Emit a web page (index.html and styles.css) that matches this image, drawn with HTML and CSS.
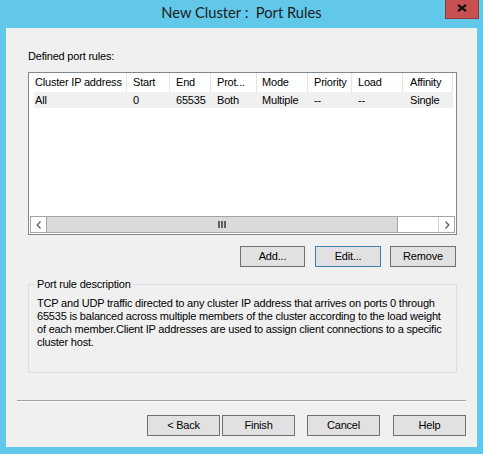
FILE: index.html
```html
<!DOCTYPE html>
<html>
<head>
<meta charset="utf-8">
<link rel="stylesheet" href="styles.css">
</head>
<body>
<div class="frame">
  <div class="titlebar">
    <span class="title">New Cluster :&nbsp; Port Rules</span>
    <div class="close"><svg width="10" height="8" viewBox="0 0 10 8"><path d="M1 0.8 L9 7.2 M9 0.8 L1 7.2" stroke="#111" stroke-width="2.2" fill="none"/></svg></div>
  </div>
  <div class="client">
    <div class="lbl">Defined port rules:</div>
    <div class="list">
      <div class="hdr">
        <div class="c c1">Cluster IP address</div>
        <div class="c c2">Start</div>
        <div class="c c3">End</div>
        <div class="c c4">Prot...</div>
        <div class="c c5">Mode</div>
        <div class="c c6">Priority</div>
        <div class="c c7">Load</div>
        <div class="c c8">Affinity</div>
      </div>
      <div class="row">
        <div class="c c1 first">All</div>
        <div class="c c2">0</div>
        <div class="c c3">65535</div>
        <div class="c c4">Both</div>
        <div class="c c5">Multiple</div>
        <div class="c c6">--</div>
        <div class="c c7">--</div>
        <div class="c c8">Single</div>
      </div>
      <div class="spacer"></div>
      <div class="hscroll">
        <div class="sbtn sleft"><svg width="6" height="8" viewBox="0 0 6 8"><path d="M4.5 0.5 L1.2 4 L4.5 7.5" stroke="#606060" stroke-width="1.3" fill="none"/></svg></div>
        <div class="thumb"><span class="grip"></span><span class="grip"></span><span class="grip"></span></div>
        <div class="track"></div>
        <div class="sbtn sright"><svg width="6" height="8" viewBox="0 0 6 8"><path d="M1.5 0.5 L4.8 4 L1.5 7.5" stroke="#606060" stroke-width="1.3" fill="none"/></svg></div>
      </div>
    </div>
    <div class="btnrow">
      <div class="btn b-add">Add...</div>
      <div class="btn b-edit">Edit...</div>
      <div class="btn b-remove">Remove</div>
    </div>
    <fieldset class="group">
      <legend>Port rule description</legend>
      <p>TCP and UDP traffic directed to any cluster IP address that arrives on ports 0 through<br>65535 is balanced across multiple members of the cluster according to the load weight<br>of each member.Client IP addresses are used to assign client connections to a specific<br>cluster host.</p>
    </fieldset>
    <div class="sep"></div>
    <div class="footer">
      <div class="btn fbtn f-back">&lt; Back</div>
      <div class="btn fbtn f-finish">Finish</div>
      <div class="btn fbtn f-cancel">Cancel</div>
      <div class="btn fbtn f-help">Help</div>
    </div>
  </div>
</div>
</body>
</html>
```
FILE: styles.css
```css
html, body {
  margin: 0;
  padding: 0;
}
body {
  background: #62c8ea;
  width: 483px;
  height: 454px;
  overflow: hidden;
  font-family: "Liberation Sans", Arial, sans-serif;
  font-size: 11px;
  letter-spacing: -0.2px;
  color: #000;
}
.frame {
  width: 483px;
  height: 454px;
}
.titlebar {
  height: 28px;
  display: grid;
  grid-template-columns: 1fr auto 1fr;
}
.title {
  grid-column: 2;
  font-family: Lato, "Open Sans", sans-serif;
  font-size: 14.7px;
  letter-spacing: 0;
  line-height: 20px;
  padding-top: 2px;
  color: #1b1b1b;
  white-space: nowrap;
}
.close {
  grid-column: 3;
  justify-self: end;
  margin-right: 4px;
  width: 34px;
  height: 19px;
  box-sizing: border-box;
  background: #c75050;
  border: 1px solid #8b3c3a;
  border-top: none;
  display: flex;
  justify-content: center;
  align-items: flex-start;
  padding-top: 4px;
}
.close svg { display: block; }
.client {
  margin: 0 6px;
  height: 419px;
  background: #f0f0f0;
  box-sizing: border-box;
  padding-top: 22px;
  display: flex;
  flex-direction: column;
}
.lbl {
  margin-left: 22px;
  line-height: 13px;
  height: 13px;
}
.list {
  margin-left: 22px;
  margin-top: 9px;
  width: 429px;
  height: 163px;
  box-sizing: border-box;
  border: 1px solid #828790;
  background: #fff;
  display: flex;
  flex-direction: column;
}
.hdr, .row {
  display: flex;
  white-space: nowrap;
}
.hdr {
  height: 19px;
  line-height: 19px;
}
.hdr .c {
  border-right: 1px solid #e5e5e5;
}
.row {
  height: 16px;
  line-height: 16px;
}
.c {
  box-sizing: border-box;
  padding-left: 6px;
  overflow: hidden;
}
.row .c { background: #f0f0f0; }
.row .first {
  margin-left: 5px;
  padding-left: 1px;
  width: 93px;
}
.c1 { width: 98px; }
.c2 { width: 43px; }
.c3 { width: 41px; }
.c4 { width: 46px; }
.c5 { width: 51px; padding-left: 5px; }
.c6 { width: 44px; }
.c7 { width: 51px; }
.c8 { width: 50px; padding-left: 7px; }
.spacer { flex: 1; }
.hscroll {
  margin: 0 1px 1px 1px;
  height: 17px;
  box-sizing: border-box;
  border: 1px solid #a5a5a5;
  display: flex;
  background: #fff;
}
.sbtn {
  width: 16px;
  box-sizing: border-box;
  display: flex;
  align-items: center;
  justify-content: center;
  background: #fff;
}
.sleft { border-right: 1px solid #a5a5a5; }
.sright { border-left: 1px solid #cfcfcf; }
.thumb {
  width: 350px;
  background: #dadada;
  border-right: 1px solid #a5a5a5;
  display: flex;
  justify-content: center;
  align-items: center;
  gap: 1px;
}
.grip {
  width: 2px;
  height: 7px;
  background: #606060;
}
.track { flex: 1; background: #fff; }
.btnrow {
  margin-left: 22px;
  margin-top: 11px;
  width: 428px;
  height: 21px;
  display: flex;
  justify-content: flex-end;
}
.btn {
  box-sizing: border-box;
  height: 21px;
  border: 1px solid #707070;
  background: #e1e1e1;
  text-align: center;
  line-height: 19px;
}
.b-add { width: 65px; }
.b-edit { width: 66px; margin-left: 10px; border-color: #3c7fb1; }
.b-remove { width: 66px; margin-left: 9px; }
.group {
  margin: 11px 0 0 22px;
  width: 429px;
  height: 95px;
  box-sizing: border-box;
  border: 1px solid #d5dfe5;
  padding: 6px 8px 0 8px;
  min-width: 0;
}
.group legend {
  padding: 0 2px;
  margin-left: -2px;
  line-height: 13px;
}
.group p {
  margin: 0;
  line-height: 13px;
  white-space: nowrap;
}
.sep {
  margin: 27px 0 0 11px;
  width: 449px;
  height: 1px;
  background: #a0a0a0;
  border-bottom: 1px solid #ffffff;
}
.footer {
  margin-top: 13px;
  display: flex;
  height: 21px;
}
.fbtn { width: 73px; }
.f-back { margin-left: 141px; }
.f-finish { margin-left: 2px; }
.f-cancel { margin-left: 12px; }
.f-help { margin-left: 13px; }
```
